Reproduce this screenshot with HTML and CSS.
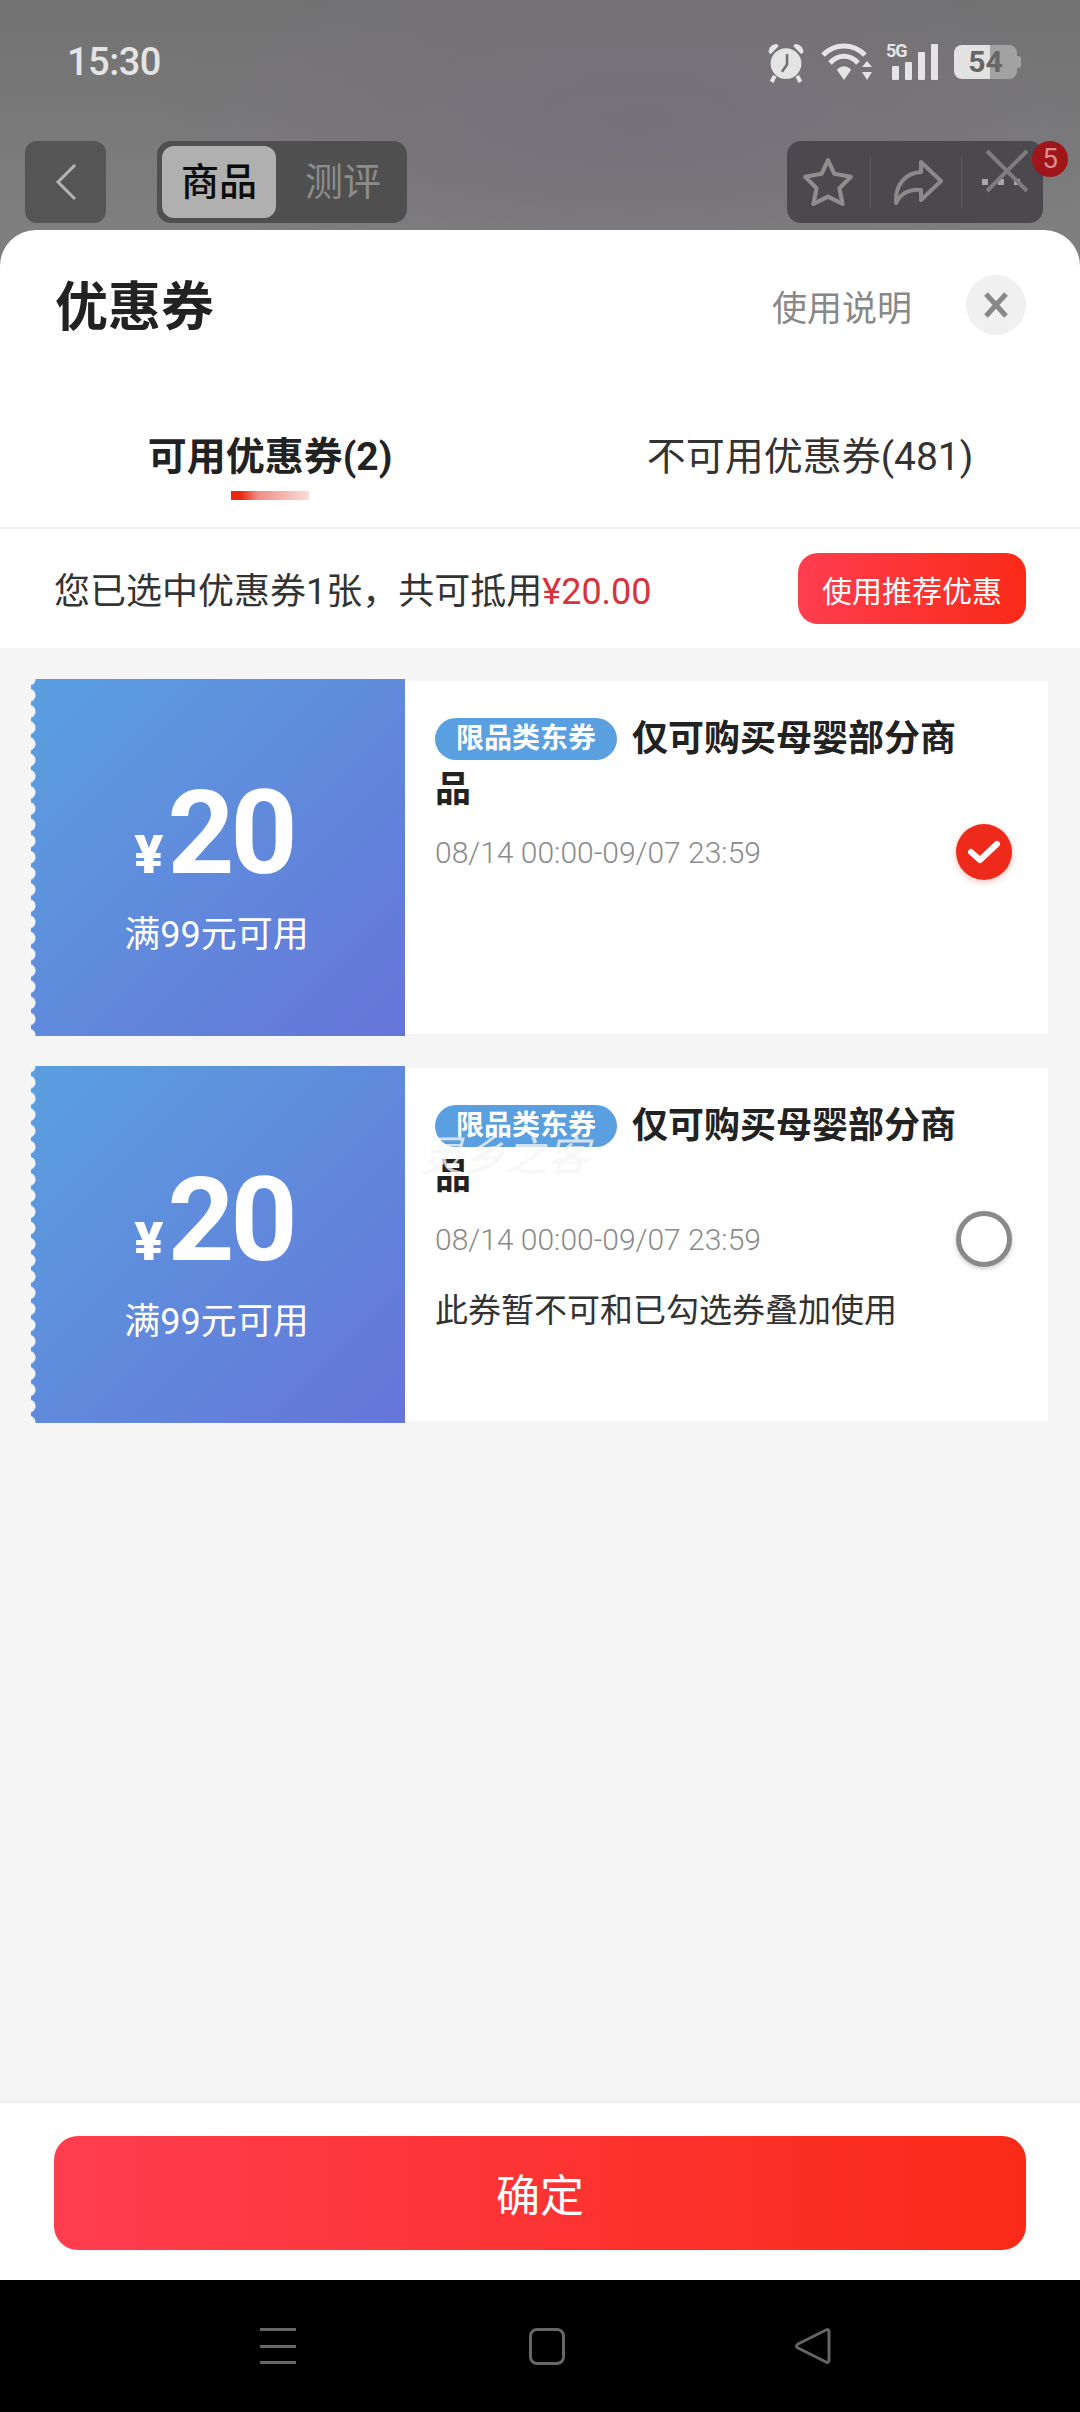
FILE: index.html
```html
<!DOCTYPE html>
<html lang="zh-CN">
<head>
  <meta charset="UTF-8">
  <meta name="viewport" content="width=device-width, initial-scale=1.0">
  <title>优惠券</title>
  <link rel="stylesheet" href="styles.css">
</head>
<body>
  <div class="top">
    <div class="statusbar">
      <span class="time">15:30</span>
      <div class="status-icons">
        <svg class="ic-alarm" width="40" height="41" viewBox="0 0 38 40">
          <path d="M2 10 C2 5 6 2 10 2 L12 4 L4 12 Z M36 10 C36 5 32 2 28 2 L26 4 L34 12 Z" fill="#e4e4e4"/>
          <circle cx="19" cy="21" r="15" fill="#e4e4e4"/>
          <path d="M8 33 L5 39 M30 33 L33 39" stroke="#e4e4e4" stroke-width="4"/>
          <path d="M20 12 V22 L15 29" stroke="#6f6f6f" stroke-width="2.5" fill="none"/>
        </svg>
        <svg class="ic-wifi" width="52" height="38" viewBox="0 0 52 38">
          <path d="M2 12 C14 0 32 0 44 12" stroke="#e4e4e4" stroke-width="5" fill="none"/>
          <path d="M9 20 C17 11 29 11 37 20" stroke="#e4e4e4" stroke-width="5" fill="none"/>
          <path d="M16 27 C20 22 26 22 30 27 L23 37 Z" fill="#e4e4e4"/>
          <path d="M46 18 L51 24 H41 Z M46 37 L51 29 H41 Z" fill="#e4e4e4"/>
        </svg>
        <div class="signal">
          <span class="net">5G</span>
          <i class="bar b1"></i><i class="bar b2"></i><i class="bar b3"></i><i class="bar b4"></i>
        </div>
        <div class="battery"><span class="batt-num">54</span></div>
      </div>
    </div>
    <div class="topnav">
      <div class="back">
        <svg width="24" height="38" viewBox="0 0 24 38"><path d="M21 2 L4 19 L21 36" stroke="#b4b4b4" stroke-width="3" fill="none"/></svg>
      </div>
      <div class="seg">
        <span class="seg-item on">商品</span>
        <span class="seg-item">测评</span>
      </div>
      <div class="actions">
        <div class="act">
          <svg width="52" height="50" viewBox="0 0 50 48"><path d="M25 3 L31 16 L47 19 L36 30 L39 45 L25 38 L11 45 L14 30 L3 19 L19 16 Z" stroke="#8e8e8e" stroke-width="4" stroke-linejoin="round" fill="none"/></svg>
        </div>
        <div class="act">
          <svg width="52" height="46" viewBox="0 0 52 46"><path d="M29 3 L49 22 L29 41 V31 C18 30 9 34 4 44 C3 26 13 14 29 13 Z" stroke="#8a8a8a" stroke-width="4" stroke-linejoin="round" fill="none"/></svg>
        </div>
        <div class="act act-more"><i></i><i></i><i></i></div>
        <svg class="ghost-x" width="44" height="44" viewBox="0 0 44 44"><path d="M2 2 L42 42 M42 2 L2 42" stroke="#7d7d7d" stroke-width="4"/></svg>
        <span class="badge">5</span>
      </div>
    </div>
  </div>

  <div class="sheet">
    <div class="sheet-head">
      <h1 class="sheet-title">优惠券</h1>
      <span class="help">使用说明</span>
      <div class="close">
        <svg width="30" height="30" viewBox="0 0 30 30"><path d="M5 4 L25 26 M25 4 L5 26" stroke="#888" stroke-width="5"/></svg>
      </div>
    </div>

    <div class="tabs">
      <div class="tab active">可用优惠券(2)<span class="tab-line"></span></div>
      <div class="tab">不可用优惠券(481)</div>
    </div>

    <div class="summary">
      <span class="summary-text">您已选中优惠券1张，共可抵用<em class="price">¥20.00</em></span>
      <button class="btn-rec">使用推荐优惠</button>
    </div>

    <div class="list">
      <div class="coupon">
        <div class="coupon-left">
          <div class="amount"><span class="yen">¥</span><span class="num">20</span></div>
          <div class="cond">满99元可用</div>
        </div>
        <div class="coupon-body">
          <div class="coupon-title"><span class="tag">限品类东券</span>仅可购买母婴部分商品</div>
          <div class="date-row">
            <span class="date">08/14 00:00-09/07 23:59</span>
            <span class="radio checked">
              <svg width="34" height="26" viewBox="0 0 34 26"><path d="M4 13 L13 21 L30 5" stroke="#fff" stroke-width="6" stroke-linecap="round" stroke-linejoin="round" fill="none"/></svg>
            </span>
          </div>
        </div>
      </div>

      <div class="coupon">
        <div class="coupon-left">
          <div class="amount"><span class="yen">¥</span><span class="num">20</span></div>
          <div class="cond">满99元可用</div>
        </div>
        <div class="coupon-body">
          <div class="coupon-title"><span class="tag">限品类东券</span>仅可购买母婴部分商品</div>
          <div class="date-row">
            <span class="date">08/14 00:00-09/07 23:59</span>
            <span class="radio"></span>
          </div>
          <div class="warn">此券暂不可和已勾选券叠加使用</div>
          <span class="watermark">灵乡之客</span>
        </div>
      </div>
    </div>

    <div class="footer">
      <button class="btn-ok">确定</button>
    </div>
  </div>

  <div class="navbar">
    <div class="nav-menu"><i></i><i></i><i></i></div>
    <div class="nav-home"></div>
    <svg class="nav-back" width="36" height="36" viewBox="0 0 36 36"><path d="M31 2 C33 1 34 2 34 4 V32 C34 34 33 35 31 34 L3 20 C1 19 1 17 3 16 Z" stroke="#666" stroke-width="3" fill="none"/></svg>
  </div>
</body>
</html>
```

FILE: styles.css
```css
* {
  box-sizing: border-box;
}
body {
  margin: 0;
  width: 1080px;
  height: 2412px;
  overflow: hidden;
  display: flex;
  flex-direction: column;
  font-family: Roboto, "Noto Sans CJK SC", sans-serif;
  color: #222;
  background: radial-gradient(ellipse 500px 180px at 640px 120px, #76707a, rgba(118, 112, 122, 0)), linear-gradient(180deg, #727272, #7f7f7f 230px);
}
i {
  display: block;
}

/* status bar + dimmed page header */
.top {
  height: 230px;
  flex: none;
}
.statusbar {
  height: 124px;
  padding: 0 63px 0 67px;
  display: flex;
  align-items: center;
  justify-content: space-between;
  color: #e4e4e4;
}
.time {
  font-size: 38px;
  font-weight: 500;
  letter-spacing: -0.5px;
}
.status-icons {
  display: flex;
  align-items: center;
}
.ic-alarm {
  margin-right: 15px;
}
.ic-wifi {
  margin-right: 19px;
}
.signal {
  position: relative;
  width: 46px;
  height: 36px;
  display: flex;
  align-items: flex-end;
  gap: 6px;
  margin-right: 16px;
}
.net {
  position: absolute;
  left: -6px;
  top: -3px;
  font-size: 18px;
  font-weight: 700;
  line-height: 20px;
  letter-spacing: -1px;
}
.bar {
  width: 7px;
  background: #e4e4e4;
  border-radius: 1px;
}
.b1 { height: 14px; }
.b2 { height: 18px; }
.b3 { height: 28px; }
.b4 { height: 36px; }
.battery {
  position: relative;
  width: 63px;
  height: 34px;
  border-radius: 8px;
  background: linear-gradient(90deg, #e2e2e2 57%, #a2a2a2 57%);
  display: flex;
  align-items: center;
  justify-content: center;
}
.battery::after {
  content: "";
  position: absolute;
  right: -4px;
  top: 11px;
  width: 4px;
  height: 12px;
  background: #a2a2a2;
  border-radius: 0 3px 3px 0;
}
.batt-num {
  font-size: 30px;
  font-weight: 700;
  line-height: 1;
  color: #666;
}
.topnav {
  margin-top: 17px;
  height: 82px;
  padding: 0 37px 0 25px;
  display: flex;
}
.back {
  width: 81px;
  border-radius: 12px;
  background: #555;
  display: flex;
  align-items: center;
  justify-content: center;
}
.seg {
  margin-left: 51px;
  width: 250px;
  padding: 5px;
  border-radius: 14px;
  background: #4f4f4f;
  display: flex;
}
.seg-item {
  width: 114px;
  font-size: 38px;
  line-height: 72px;
  text-align: center;
  color: #8c8c8c;
  border-radius: 12px;
}
.seg-item + .seg-item {
  margin-left: 10px;
}
.seg-item.on {
  background: #b0b0b0;
  color: #0c0c0c;
  font-weight: 500;
}
.actions {
  position: relative;
  margin-left: auto;
  width: 256px;
  border-radius: 14px;
  background: #4b494d;
  display: flex;
  padding: 15px 0;
}
.act {
  display: flex;
  align-items: center;
  justify-content: center;
  border-right: 1px solid #5c5a5e;
}
.act:nth-child(1) {
  width: 84px;
  padding-right: 2px;
}
.act:nth-child(2) {
  width: 91px;
  padding-left: 3px;
}
.act-more {
  flex: 1;
  border-right: none;
  gap: 10px;
  padding-right: 4px;
}
.act-more i {
  width: 6px;
  height: 6px;
  background: #a8a8a8;
}
.ghost-x {
  position: absolute;
  left: 198px;
  top: 8px;
}
.badge {
  position: absolute;
  right: -25px;
  top: 0;
  width: 36px;
  height: 36px;
  border-radius: 50%;
  background: #a01519;
  color: #d98e8e;
  font-size: 28px;
  line-height: 36px;
  text-align: center;
}

/* bottom sheet */
.sheet {
  flex: 1;
  min-height: 0;
  background: #fff;
  border-radius: 36px 36px 0 0;
  display: flex;
  flex-direction: column;
}
.sheet-head {
  margin-top: 45px;
  height: 60px;
  padding: 0 54px 0 55px;
  display: flex;
  align-items: center;
}
.sheet-title {
  margin: 0;
  flex: 1;
  font-size: 53px;
  font-weight: 700;
  line-height: 64px;
  color: #222;
  padding-top: 5px;
}
.help {
  font-size: 35px;
  color: #888;
  margin-right: 54px;
}
.close {
  width: 60px;
  height: 60px;
  border-radius: 50%;
  background: #f0f0f0;
  display: flex;
  align-items: center;
  justify-content: center;
}
.tabs {
  margin-top: 97px;
  height: 97px;
  display: flex;
  border-bottom: 2px solid #f0f0f0;
}
.tab {
  width: 50%;
  font-size: 39px;
  line-height: 50px;
  text-align: center;
  color: #333;
}
.tab.active {
  font-weight: 700;
  color: #222;
}
.tab-line {
  display: block;
  width: 78px;
  height: 9px;
  margin: 9px auto 0;
  background: linear-gradient(90deg, #e8280f 12%, #f08f85 35%, #f8dcd9);
}
.summary {
  height: 119px;
  flex: none;
  padding: 0 54px 0 54px;
  display: flex;
  align-items: center;
  justify-content: space-between;
  font-size: 36px;
  color: #333;
}
.summary-text {
  margin-bottom: 2px;
}
.price {
  font-style: normal;
  color: #d8323c;
}
.btn-rec {
  width: 228px;
  height: 71px;
  border: none;
  border-radius: 20px;
  background: linear-gradient(90deg, #ff3d4f, #fa2a18);
  color: #fff;
  font-family: inherit;
  font-size: 30px;
  padding: 0;
}
.list {
  flex: 1;
  min-height: 0;
  background: #f5f5f5;
  padding: 31px 32px 0 31px;
  display: flex;
  flex-direction: column;
  gap: 30px;
}
.coupon {
  height: 357px;
  display: flex;
}
.coupon-left {
  position: relative;
  width: 374px;
  background: linear-gradient(135deg, #5a9fe0, #6675d8);
  color: #fff;
  text-align: center;
  padding-top: 98px;
}
/* scalloped tear edge */
.coupon-left::before {
  content: "";
  position: absolute;
  left: 0;
  top: 0;
  bottom: 0;
  width: 5px;
  background: radial-gradient(circle at -2px 50%, #f5f5f5 6px, rgba(245, 245, 245, 0) 7px) 0 -8px / 5px 16.2px repeat-y;
}
.amount {
  display: flex;
  justify-content: center;
  align-items: baseline;
  line-height: 112px;
  padding-right: 8px;
}
.yen {
  font-size: 54px;
  font-weight: 900;
  margin-right: 4px;
}
.num {
  font-size: 117px;
  font-weight: 700;
  letter-spacing: -4px;
}
.cond {
  margin-top: 1px;
  font-size: 36px;
  line-height: 46px;
  padding-right: 3px;
}
.coupon-body {
  position: relative;
  flex: 1;
  margin: 2px 0;
  padding: 33px 36px 0 30px;
  background: #fff;
}
.coupon-title {
  width: 540px;
  font-size: 36px;
  font-weight: 700;
  line-height: 51px;
  color: #222;
}
.tag {
  display: inline-block;
  width: 182px;
  height: 42px;
  margin-right: 15px;
  border-radius: 21px;
  background: #5a9fe0;
  color: #fff;
  font-size: 28px;
  line-height: 42px;
  text-align: center;
  vertical-align: 3px;
}
.date-row {
  margin-top: 8px;
  display: flex;
  align-items: center;
  justify-content: space-between;
}
.date {
  font-size: 30px;
  font-weight: 300;
  color: #8a8a8a;
}
.radio {
  width: 56px;
  height: 56px;
  border-radius: 50%;
  border: 5px solid #8a8a8a;
  background: #fff;
  box-shadow: 0 2px 5px rgba(0, 0, 0, 0.2);
  display: flex;
  align-items: center;
  justify-content: center;
}
.radio.checked {
  border: none;
  background: #ee2a1a;
  box-shadow: 0 2px 6px rgba(238, 42, 26, 0.3);
}
.warn {
  margin-top: 22px;
  font-size: 33px;
  line-height: 44px;
  color: #333;
}
.watermark {
  position: absolute;
  left: 16px;
  top: 66px;
  font-size: 42px;
  line-height: 46px;
  font-style: italic;
  color: rgba(255, 255, 255, 0.75);
  text-shadow: 0 0 1px rgba(0, 0, 0, 0.1);
}
.footer {
  flex: none;
  height: 179px;
  padding: 33px 54px 0;
  border-top: 2px solid #eee;
}
.btn-ok {
  width: 100%;
  height: 114px;
  border: none;
  border-radius: 24px;
  background: linear-gradient(90deg, #ff3d4f, #fa2a18);
  color: #fff;
  font-family: inherit;
  font-size: 44px;
  padding: 0;
}

/* system nav */
.navbar {
  flex: none;
  height: 132px;
  background: #000;
  padding-left: 260px;
  display: flex;
  align-items: center;
}
.nav-menu {
  width: 36px;
  height: 36px;
  display: flex;
  flex-direction: column;
  justify-content: space-between;
}
.nav-menu i {
  height: 3px;
  background: #666;
}
.nav-home {
  width: 36px;
  height: 37px;
  margin-left: 233px;
  border: 3px solid #666;
  border-radius: 8px;
}
.nav-back {
  margin-left: 230px;
}
```
